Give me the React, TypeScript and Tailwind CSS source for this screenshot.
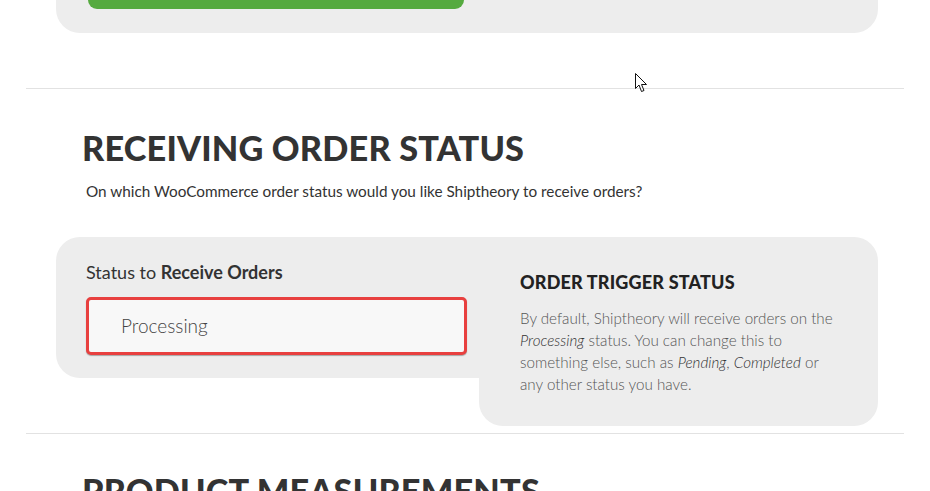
const font = { fontFamily: "Lato, 'Noto Sans', sans-serif" }

export default function App() {
  return (
    <div className="relative w-[930px] h-[491px] overflow-hidden bg-white text-[#333]" style={font}>
      {/* previous section card */}
      <div className="ml-[56px] w-[822px] h-[33px] bg-[#ededed] rounded-b-[24px] pl-[32px]">
        <div className="w-[376px] h-[9px] bg-[#55aa3f] rounded-b-[20px]" />
      </div>

      <div className="mx-[26px] mt-[55px] border-t border-[#e2e2e2]" />

      {/* Receiving order status */}
      <div className="pt-[40px]">
        <h2 className="ml-[82px] text-[34.3px] leading-[38px] font-black tracking-[0.005em] text-[#333]">
          RECEIVING ORDER STATUS
        </h2>
        <p className="ml-[86px] mt-[14px] text-[15.3px] leading-[20px] text-[#333]">
          On which WooCommerce order status would you like Shiptheory to receive orders?
        </p>

        <div className="ml-[56px] mt-[36px] flex items-start">
          <div className="w-[423px] h-[141px] bg-[#ededed] rounded-l-[24px] pl-[30px] pt-[24px]">
            <div className="text-[18px] leading-[22px] text-[#333]">
              Status to <span className="font-bold">Receive Orders</span>
            </div>
            <div className="mt-[14px] w-[381px] h-[58px] border-[3px] border-[#e8403f] rounded-[5px] bg-[#f8f8f8] shadow-[0_1px_1px_rgba(0,0,0,0.3)] flex items-center pl-[32px]">
              <span className="text-[19px] font-light text-[#444]">Processing</span>
            </div>
          </div>
          <div className="w-[399px] h-[189px] bg-[#ededed] rounded-r-[24px] rounded-bl-[24px] pl-[41px] pt-[33px]">
            <h3 className="text-[18px] leading-[24px] font-black tracking-[0.01em] text-[#222]">ORDER TRIGGER STATUS</h3>
            <p className="mt-[13px] text-[15.2px] leading-[22px] text-[#555] font-light pr-[40px]">
              By default, Shiptheory will receive orders on the <em className="text-[#333]">Processing</em> status. You can change this to something else, such as <em className="text-[#333]">Pending</em>, <em className="text-[#333]">Completed</em> or any other status you have.
            </p>
          </div>
        </div>

        <div className="mx-[26px] mt-[7px] border-t border-[#e2e2e2]" />

        <h2 className="ml-[82px] mt-[38px] text-[34.3px] leading-[38px] font-black tracking-[0.005em] text-[#333]">
          PRODUCT MEASUREMENTS
        </h2>
      </div>

      {/* mouse cursor */}
      <svg className="absolute left-[635px] top-[73px]" width="13" height="20" viewBox="0 0 13 20">
        <path d="M0.5 0.5 L0.5 15.5 L4 12 L6.5 18.5 L9 17.5 L6.5 11.5 L11.5 11.5 Z" fill="#fff" stroke="#111" strokeWidth="1" strokeLinejoin="round" />
      </svg>
    </div>
  )
}
